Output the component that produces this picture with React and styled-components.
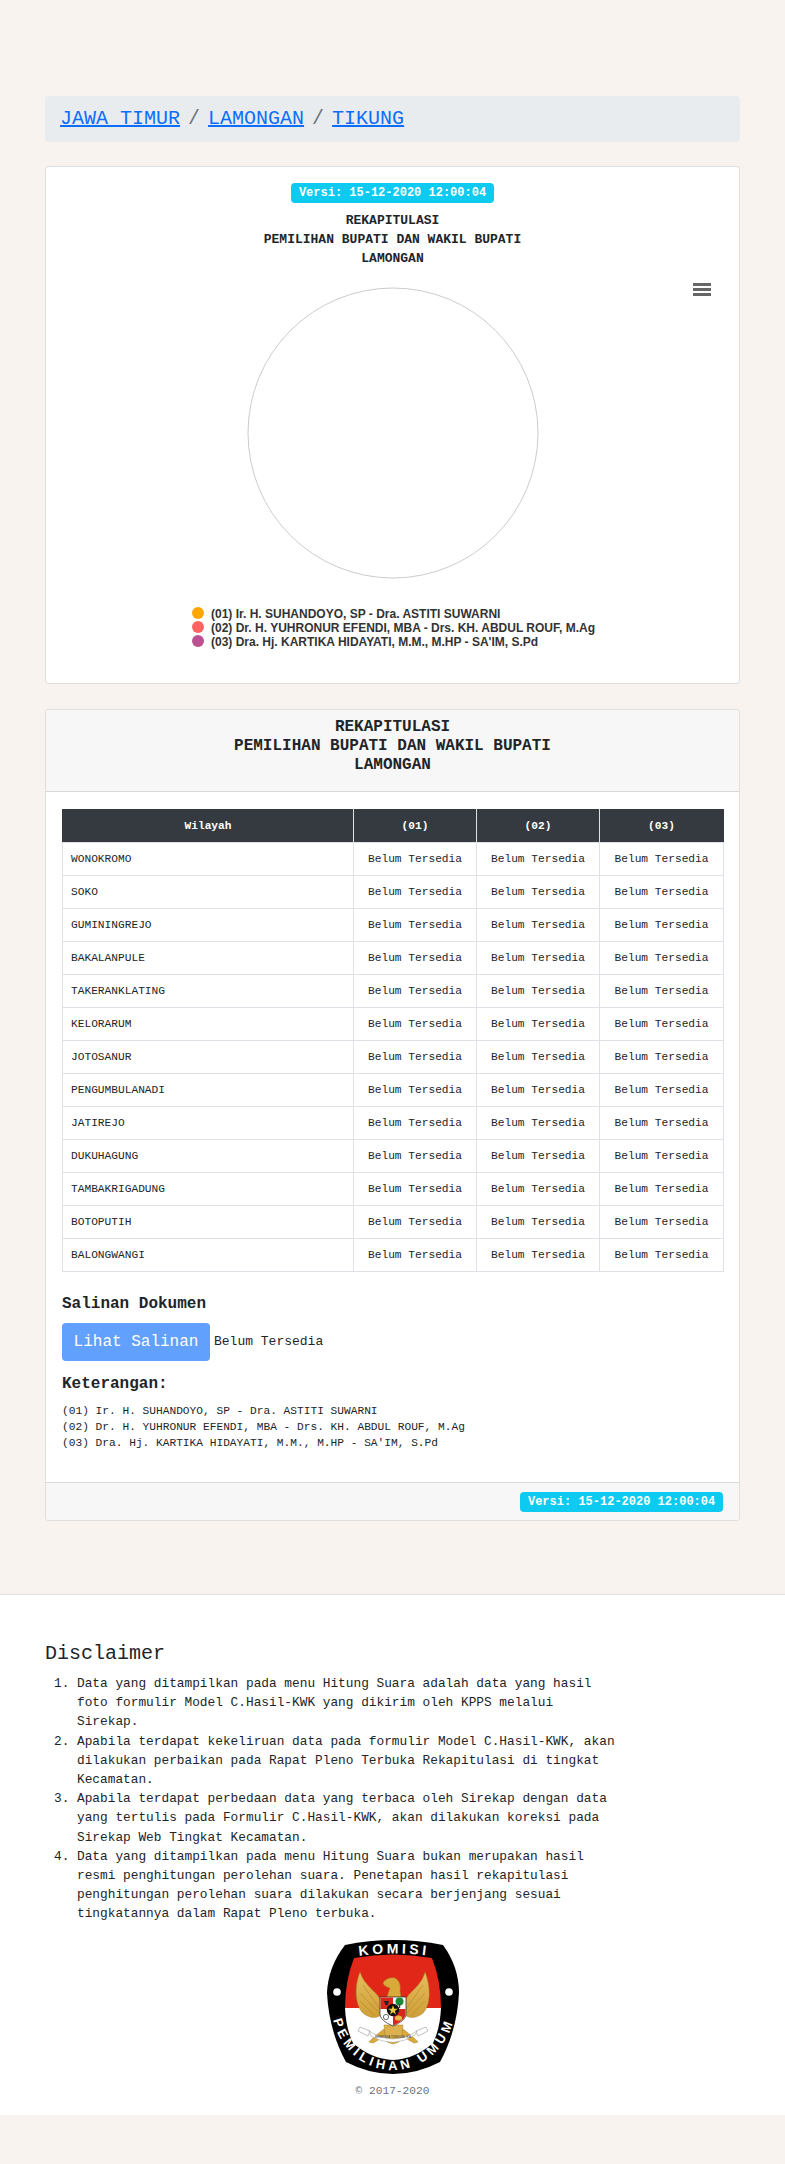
import React from "react";
import styled, { createGlobalStyle } from "styled-components";

const GlobalStyle = createGlobalStyle`
  * {
    box-sizing: border-box;
  }

  body {
    margin: 0;
    background: #f8f3ef;
    color: #212529;
    font-family: "Liberation Mono", monospace;
    font-size: 16px;
    line-height: 1.5;
  }
`;

const Page = styled.div`
  padding-top: 96px;
  padding-bottom: 49px;
`;

const Container = styled.div`
  padding: 0 45px;
`;

const Breadcrumb = styled.nav`
  display: flex;
  align-items: center;
  height: 46px;
  padding: 0 15px;
  margin-bottom: 24px;
  background: #e9ecef;
  border-radius: 4px;
  font-size: 20px;
  line-height: 30px;
`;

const Crumb = styled.a`
  color: #0d6efd;
  text-decoration: underline;
`;

const Divider = styled.span`
  padding: 0 8px;
  color: #6c757d;
`;

const Card = styled.section`
  background: #fff;
  border: 1px solid rgba(0, 0, 0, 0.125);
  border-radius: 4px;
  margin-bottom: ${(p) => p.$gap || 0}px;
`;

const ChartCard = styled(Card)`
  position: relative;
  display: flex;
  flex-direction: column;
  align-items: center;
  height: 518px;
  padding-top: 16px;
  text-align: center;
`;

const Badge = styled.span`
  display: block;
  padding: 0 7.8px;
  height: 20px;
  background: #0dcaf0;
  color: #fff;
  border-radius: 4px;
  font-size: 12px;
  font-weight: 700;
  line-height: 20px;
  white-space: nowrap;
`;

const ChartTitle = styled.h2`
  margin: 8px 0 0;
  font-size: 13px;
  font-weight: 700;
  line-height: 19px;
`;

const ChartMenu = styled.svg`
  position: absolute;
  top: 116px;
  right: 28px;
  display: block;
`;

const Pie = styled.svg`
  display: block;
  margin-top: 19px;
`;

const Legend = styled.ul`
  list-style: none;
  align-self: stretch;
  margin: 28px 0 0;
  padding: 0 0 0 146px;
  text-align: left;
`;

const LegendItem = styled.li`
  display: flex;
  align-items: center;
  height: 14px;
  color: #333;
  font-family: "Liberation Sans", Arial, sans-serif;
  font-size: 12px;
  font-weight: 700;
  line-height: 14px;
  white-space: pre;
`;

const Dot = styled.span`
  width: 12px;
  height: 12px;
  margin-right: 7px;
  border-radius: 50%;
  background: ${(p) => p.$color};
  position: relative;
  top: -1px;
`;

const CardHeader = styled.header`
  height: 82px;
  padding: 8px 16px 0;
  background: #f7f7f7;
  border-bottom: 1px solid rgba(0, 0, 0, 0.125);
  border-radius: 3px 3px 0 0;
  text-align: center;
  font-size: 16px;
  font-weight: 700;
  line-height: 19.2px;
`;

const CardBody = styled.div`
  height: 690px;
  padding: 17px 16px 0;
`;

const Table = styled.table`
  width: 100%;
  border-collapse: collapse;
  table-layout: fixed;
  font-size: 11.2px;
  line-height: 16px;
`;

const HeadCell = styled.th`
  width: ${(p) => p.$width}px;
  height: 33px;
  padding: 8px;
  background: #343a40;
  color: #fff;
  border: 1px solid #dee2e6;
  border-top-color: #343a40;
  border-left-color: ${(p) => (p.$first ? "#343a40" : "#dee2e6")};
  border-right-color: ${(p) => (p.$last ? "#343a40" : "#dee2e6")};
  font-weight: 700;
`;

const Cell = styled.td`
  height: 33px;
  padding: 8px;
  border: 1px solid #dee2e6;
  text-align: ${(p) => (p.$left ? "left" : "center")};
`;

const SectionTitle = styled.h5`
  margin: ${(p) => p.$top}px 0 0;
  font-size: 16px;
  font-weight: 700;
  line-height: 19.2px;
`;

const CopyRow = styled.div`
  display: flex;
  align-items: center;
  margin-top: 9px;
  font-size: 13px;
  white-space: pre;
`;

const CopyButton = styled.button`
  width: 148px;
  height: 38px;
  padding: 0;
  margin-right: 4px;
  background: #0d6efd;
  opacity: 0.65;
  border: 0;
  border-radius: 4px;
  color: #fff;
  font-family: inherit;
  font-size: 16px;
`;

const NoteList = styled.div`
  margin-top: 9px;
  font-size: 11.2px;
  line-height: 16px;
`;

const CardFooter = styled.footer`
  display: flex;
  align-items: center;
  justify-content: flex-end;
  height: 38px;
  padding: 0 16px;
  background: #f7f7f7;
  border-top: 1px solid rgba(0, 0, 0, 0.125);
  border-radius: 0 0 3px 3px;
`;

const SiteFooter = styled.footer`
  margin-top: 73px;
  height: 521px;
  padding: 44px 45px 0;
  background: #fff;
  border-top: 1px solid #dee2e6;
`;

const DisclaimerTitle = styled.h5`
  margin: 0 0 5px;
  font-size: 20px;
  font-weight: 400;
  line-height: 30px;
`;

const DisclaimerList = styled.ol`
  margin: 0;
  padding: 0 0 0 32px;
  width: 572px;
  font-size: 12.8px;
  line-height: 19.2px;
`;

const LogoBlock = styled.div`
  display: flex;
  flex-direction: column;
  align-items: center;
  margin-top: 15px;
`;

const Copyright = styled.div`
  margin-top: 9px;
  color: #6c757d;
  font-size: 11.2px;
  line-height: 16.8px;
`;

const candidates = [
  { no: "01", name: "Ir. H. SUHANDOYO, SP - Dra. ASTITI SUWARNI", color: "#ffa600" },
  { no: "02", name: "Dr. H. YUHRONUR EFENDI, MBA - Drs. KH. ABDUL ROUF, M.Ag", color: "#ff6361" },
  { no: "03", name: "Dra. Hj. KARTIKA HIDAYATI, M.M., M.HP - SA'IM, S.Pd", color: "#bc5090" },
];

const villages = [
  "WONOKROMO",
  "SOKO",
  "GUMININGREJO",
  "BAKALANPULE",
  "TAKERANKLATING",
  "KELORARUM",
  "JOTOSANUR",
  "PENGUMBULANADI",
  "JATIREJO",
  "DUKUHAGUNG",
  "TAMBAKRIGADUNG",
  "BOTOPUTIH",
  "BALONGWANGI",
];

const disclaimers = [
  "Data yang ditampilkan pada menu Hitung Suara adalah data yang hasil foto formulir Model C.Hasil-KWK yang dikirim oleh KPPS melalui Sirekap.",
  "Apabila terdapat kekeliruan data pada formulir Model C.Hasil-KWK, akan dilakukan perbaikan pada Rapat Pleno Terbuka Rekapitulasi di tingkat Kecamatan.",
  "Apabila terdapat perbedaan data yang terbaca oleh Sirekap dengan data yang tertulis pada Formulir C.Hasil-KWK, akan dilakukan koreksi pada Sirekap Web Tingkat Kecamatan.",
  "Data yang ditampilkan pada menu Hitung Suara bukan merupakan hasil resmi penghitungan perolehan suara. Penetapan hasil rekapitulasi penghitungan perolehan suara dilakukan secara berjenjang sesuai tingkatannya dalam Rapat Pleno terbuka.",
];

function KpuLogo() {
  return (
    <svg width="132" height="135" viewBox="0 0 132 135">
      <defs>
        <path id="logoTop" d="M24 18 Q66 11 110 18" />
        <path id="logoBottom" d="M5 74 C9 106 34 131 66 131 C98 131 123 106 128 74" />
        <clipPath id="logoInner">
          <path d="M27 19 Q66 12 105 19 Q114 42 114 69 Q113 90 106 104 Q88 120 66 121 Q44 120 26 104 Q19 90 18 69 Q18 42 27 19Z" />
        </clipPath>
        <linearGradient id="logoGold" x1="0" y1="0" x2="0" y2="1">
          <stop offset="0" stopColor="#e6bd5c" />
          <stop offset="1" stopColor="#cf9f38" />
        </linearGradient>
      </defs>
      <path
        d="M18 6 Q66 -4 116 6 Q132 28 132 54 Q130 92 113 123 Q90 135 66 135 Q42 135 19 123 Q2 92 0 54 Q1 28 18 6Z"
        fill="#000"
      />
      <g clipPath="url(#logoInner)">
        <rect x="0" y="0" width="132" height="69" fill="#e02718" />
        <rect x="0" y="69" width="132" height="66" fill="#fff" />
      </g>
      <circle cx="10" cy="53" r="3.8" fill="#fff" />
      <circle cx="122" cy="53" r="3.8" fill="#fff" />
      <text fill="#fff" fontFamily="Liberation Sans, sans-serif" fontWeight="700" fontSize="14" letterSpacing="3.4">
        <textPath href="#logoTop" startOffset="50%" textAnchor="middle">KOMISI</textPath>
      </text>
      <text fill="#fff" fontFamily="Liberation Sans, sans-serif" fontWeight="700" fontSize="13" letterSpacing="3.8">
        <textPath href="#logoBottom" startOffset="50%" textAnchor="middle">PEMILIHAN UMUM</textPath>
      </text>

      {/* garuda */}
      <g stroke="#a97f24" strokeWidth="0.5">
        <path d="M33 33 C27 48 28 66 36 74 C42 79 49 80 54 76 L54 62 C50 52 38 48 33 33Z" fill="url(#logoGold)" />
        <path d="M98 33 C104 48 104 66 96 74 C90 79 83 80 78 76 L78 62 C82 52 94 48 98 33Z" fill="url(#logoGold)" />
        <path d="M36 46 L53 70 M33 54 L52 74 M33 62 L48 77 M96 46 L79 70 M98 54 L80 74 M98 62 L84 77" fill="none" />
        <path d="M56 44 C58 40 63 38 68 39 C72 41 74 46 73 52 L74 58 L60 58 L63 49 C60 48 57 47 56 44Z" fill="#d9a93a" />
        <path d="M57 90 L47 98 L42 103 L46 104 L53 100 L60 94Z" fill="#d9a93a" />
        <path d="M76 90 L86 98 L91 103 L87 104 L80 100 L72 94Z" fill="#d9a93a" />
        <path d="M57 86 L76 86 L75 96 L72 103 L66 105 L60 103 L58 96Z" fill="#dcb04c" />
      </g>
      <path d="M33 88 L43 92 L41 97 L31 92Z M99 88 L89 92 L91 97 L101 92Z" fill="#fff" stroke="#999" strokeWidth="0.6" />
      <path d="M42 92 Q66 108 90 92 L88 96 Q66 110 44 97Z" fill="#fff" stroke="#999" strokeWidth="0.5" />
      <text x="66" y="99" textAnchor="middle" fontFamily="Liberation Sans, sans-serif" fontSize="3" fill="#333">
        BHINNEKA TUNGGAL IKA
      </text>

      {/* shield */}
      <path d="M53 58 L79 58 L79 76 Q78 82 66 87 Q54 82 53 76Z" fill="#fff" stroke="#222" strokeWidth="0.7" />
      <path d="M53.5 58.5 L66 58.5 L66 70 L53.5 70Z" fill="#d8261c" />
      <path d="M66 70 L78.5 70 L78.5 76 Q77.6 81.5 66 86.5Z" fill="#d8261c" />
      <circle cx="72.5" cy="62.5" r="4" fill="#1d8a3a" />
      <rect x="71.8" y="65" width="1.4" height="4" fill="#5b3a1a" />
      <path d="M57 62 L62 62 L60.5 66 L58.5 66Z" fill="#222" />
      <circle cx="66" cy="71" r="6.2" fill="#111" />
      <path d="M66 66.3 L67.2 69.8 L70.8 69.8 L67.9 71.9 L69 75.4 L66 73.2 L63 75.4 L64.1 71.9 L61.2 69.8 L64.8 69.8Z" fill="#f0c93a" />
      <ellipse cx="71.5" cy="79" rx="3.6" ry="2.6" fill="#e6b94c" />
      <circle cx="59" cy="78" r="2.6" fill="none" stroke="#444" strokeWidth="0.8" />
    </svg>
  );
}

export default function App() {
  return (
    <Page>
      <GlobalStyle />
      <Container>
        <Breadcrumb>
          <Crumb href="#">JAWA TIMUR</Crumb>
          <Divider>/</Divider>
          <Crumb href="#">LAMONGAN</Crumb>
          <Divider>/</Divider>
          <Crumb href="#">TIKUNG</Crumb>
        </Breadcrumb>

        <ChartCard $gap={25}>
          <Badge>Versi: 15-12-2020 12:00:04</Badge>
          <ChartTitle>
            REKAPITULASI
            <br />
            PEMILIHAN BUPATI DAN WAKIL BUPATI
            <br />
            LAMONGAN
          </ChartTitle>
          <ChartMenu width="18" height="13" viewBox="0 0 18 13">
            <path d="M0 0h18v3H0zM0 5h18v3H0zM0 10h18v3H0z" fill="#666" />
          </ChartMenu>
          <Pie width="292" height="292" viewBox="0 0 292 292">
            <circle cx="146" cy="146" r="145" fill="#fff" stroke="#ccc" strokeWidth="1" />
          </Pie>
          <Legend>
            {candidates.map((c) => (
              <LegendItem key={c.no}>
                <Dot $color={c.color} />
                {`(${c.no}) ${c.name}`}
              </LegendItem>
            ))}
          </Legend>
        </ChartCard>

        <Card>
          <CardHeader>
            REKAPITULASI
            <br />
            PEMILIHAN BUPATI DAN WAKIL BUPATI
            <br />
            LAMONGAN
          </CardHeader>
          <CardBody>
            <Table>
              <thead>
                <tr>
                  <HeadCell $width={291} $first>Wilayah</HeadCell>
                  <HeadCell $width={123}>(01)</HeadCell>
                  <HeadCell $width={123}>(02)</HeadCell>
                  <HeadCell $width={124} $last>(03)</HeadCell>
                </tr>
              </thead>
              <tbody>
                {villages.map((v) => (
                  <tr key={v}>
                    <Cell $left>{v}</Cell>
                    <Cell>Belum Tersedia</Cell>
                    <Cell>Belum Tersedia</Cell>
                    <Cell>Belum Tersedia</Cell>
                  </tr>
                ))}
              </tbody>
            </Table>
            <SectionTitle $top={23}>Salinan Dokumen</SectionTitle>
            <CopyRow>
              <CopyButton disabled>Lihat Salinan</CopyButton>
              Belum Tersedia
            </CopyRow>
            <SectionTitle $top={14}>Keterangan:</SectionTitle>
            <NoteList>
              {candidates.map((c) => (
                <div key={c.no}>
                  ({c.no}) {c.name}
                </div>
              ))}
            </NoteList>
          </CardBody>
          <CardFooter>
            <Badge>Versi: 15-12-2020 12:00:04</Badge>
          </CardFooter>
        </Card>
      </Container>

      <SiteFooter>
        <DisclaimerTitle>Disclaimer</DisclaimerTitle>
        <DisclaimerList>
          {disclaimers.map((d) => (
            <li key={d}>{d}</li>
          ))}
        </DisclaimerList>
        <LogoBlock>
          <KpuLogo />
          <Copyright>© 2017-2020</Copyright>
        </LogoBlock>
      </SiteFooter>
    </Page>
  );
}
